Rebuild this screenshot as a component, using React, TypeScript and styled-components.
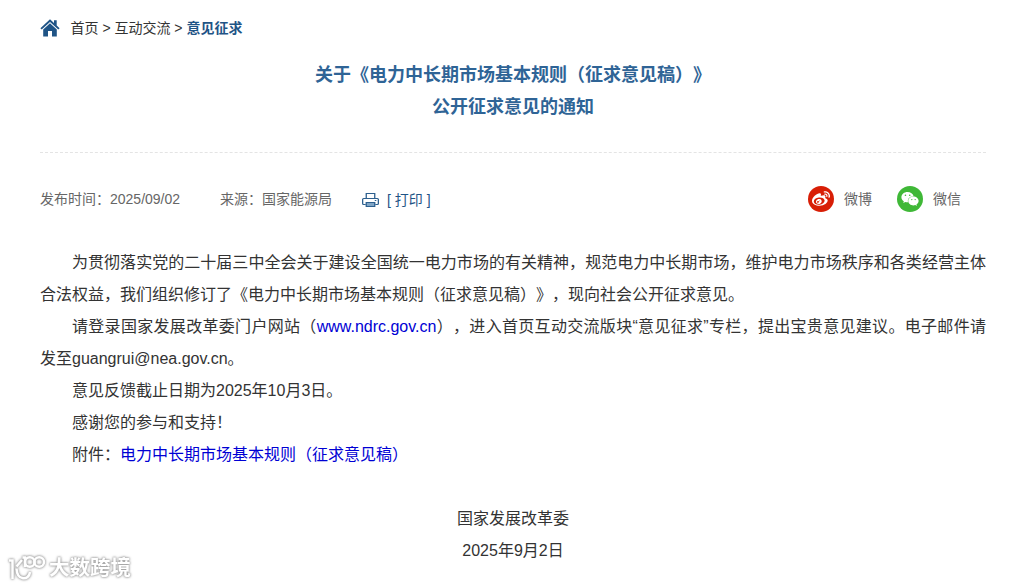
import React from "react";
import styled, { createGlobalStyle } from "styled-components";
import { FaWeibo, FaWeixin } from "react-icons/fa";

const GlobalStyle = createGlobalStyle`
  * { box-sizing: border-box; }
  body {
    margin: 0;
    background: #fff;
    color: #333;
    font-family: "Liberation Sans", "Noto Sans CJK SC", sans-serif;
    text-spacing-trim: space-all;
    overflow: hidden;
  }
`;

const Page = styled.main`
  position: relative;
  width: 1011px;
  height: 586px;
  padding: 18px 25px 0 40px;
  overflow: hidden;
`;

const Breadcrumb = styled.nav`
  display: flex;
  align-items: center;
  height: 20px;
  font-size: 14px;
  line-height: 20px;
  white-space: pre;
`;

const HomeIcon = styled.svg`
  width: 20px;
  height: 18px;
  margin-right: 10.5px;
  fill: #1f5486;
`;

const Current = styled.span`
  color: #1f5486;
  font-weight: bold;
`;

const Title = styled.h1`
  margin: 21px 0 0;
  padding: 0 0 29px;
  border-bottom: 1px dashed #e4e4e4;
  color: #2f6496;
  font-size: 18px;
  line-height: 32px;
  text-align: center;
`;

const Meta = styled.div`
  display: flex;
  align-items: center;
  height: 92px;
  margin-bottom: 2px;
  font-size: 14px;
  line-height: 20px;
  color: #666;
  white-space: pre;
`;

const Source = styled.span`
  margin-left: 40px;
`;

const Print = styled.span`
  display: flex;
  align-items: center;
  margin: 2px auto 0 30px;
  color: #1f5486;
  gap: 8px;
`;

const PrintIcon = styled.svg`
  width: 17px;
  height: 16px;
  fill: none;
  stroke: #2c5f8e;
  stroke-width: 1.2;
`;

const Share = styled.span`
  display: flex;
  align-items: center;
  margin-right: 25px;
  gap: 10px;
`;

const Badge = styled.span<{ $color: string }>`
  display: flex;
  align-items: center;
  justify-content: center;
  width: 26px;
  height: 26px;
  border-radius: 50%;
  background: ${(p) => p.$color};
  color: #fff;
  font-size: 18px;
`;

const Article = styled.article`
  font-size: 16px;
  line-height: 32px;
`;

const Paragraph = styled.p`
  margin: 0;
  text-indent: 32px;
  text-align: justify;
`;

const Link = styled.a`
  color: #0000d4;
`;

const Signature = styled.footer`
  margin-top: 32px;
  text-align: center;
  font-size: 16px;
  line-height: 32px;
`;

const Watermark = styled.div`
  position: absolute;
  left: 8px;
  bottom: 4px;
  display: flex;
  align-items: center;
  gap: 3px;
  color: #fff;
  font-size: 20.5px;
  font-weight: bold;
  line-height: 28px;
  filter: drop-shadow(0 0 1px #999) drop-shadow(0 0 1px #bbb);
`;

const WatermarkLogo = styled.svg`
  width: 38px;
  height: 28px;
  fill: none;
  stroke: #fff;
  stroke-width: 2.5;
`;

export default function App() {
  return (
    <>
      <GlobalStyle />
      <Page>
        <Breadcrumb>
          <HomeIcon viewBox="0 0 20 18" preserveAspectRatio="none">
            <path d="M10 0.3 0.4 9.2 1.7 10.5 10 3.1 18.3 10.5 19.6 9.2 16.7 6.5V1.3H14V4.1Z" />
            <path d="M10 4.3 3.2 10.4V17.5H8V12H12V17.5H16.8V10.4Z" />
          </HomeIcon>
          <span>首页 &gt; 互动交流 &gt; </span>
          <Current>意见征求</Current>
        </Breadcrumb>
        <Title>
          关于《电力中长期市场基本规则（征求意见稿）》
          <br />
          公开征求意见的通知
        </Title>
        <Meta>
          <span>发布时间：2025/09/02</span>
          <Source>来源：国家能源局</Source>
          <Print>
            <PrintIcon viewBox="0 0 16 16" preserveAspectRatio="none">
              <path d="M4 6V1.5H12V6M3.5 12.5H1.5Q.6 12.5.6 11.5V7.5Q.6 6.5 1.5 6.5H14.5Q15.4 6.5 15.4 7.5V11.5Q15.4 12.5 14.5 12.5H12.5M12 8.5H13.5" />
              <path d="M4 10.5H12V14.5H4Z" fill="#7fa5c6" />
            </PrintIcon>
            [ 打印 ]
          </Print>
          <Share>
            <Badge $color="#d81e06"><FaWeibo /></Badge>
            微博
          </Share>
          <Share>
            <Badge $color="#3fb837"><FaWeixin /></Badge>
            微信
          </Share>
        </Meta>
        <Article>
          <Paragraph>
            为贯彻落实党的二十届三中全会关于建设全国统一电力市场的有关精神，规范电力中长期市场，维护电力市场秩序和各类经营主体合法权益，我们组织修订了《电力中长期市场基本规则（征求意见稿）》，现向社会公开征求意见。
          </Paragraph>
          <Paragraph>
            请登录国家发展改革委门户网站（<Link>www.ndrc.gov.cn</Link>），进入首页互动交流版块“意见征求”专栏，提出宝贵意见建议。电子邮件请发至guangrui@nea.gov.cn。
          </Paragraph>
          <Paragraph>意见反馈截止日期为2025年10月3日。</Paragraph>
          <Paragraph>感谢您的参与和支持！</Paragraph>
          <Paragraph>
            附件：<Link>电力中长期市场基本规则（征求意见稿）</Link>
          </Paragraph>
        </Article>
        <Signature>
          国家发展改革委
          <br />
          2025年9月2日
        </Signature>
        <Watermark>
          <WatermarkLogo viewBox="0 0 38 28">
            <path d="M1 6.5H4.5V25M14 6 8.5 12.5M8.5 14.5C9 27 21 27 22 18" />
            <path d="M14.5 3.5H17V13" />
            <circle cx="21.8" cy="8" r="4.8" />
            <circle cx="31.2" cy="8" r="4.8" />
          </WatermarkLogo>
          大数跨境
        </Watermark>
      </Page>
    </>
  );
}
